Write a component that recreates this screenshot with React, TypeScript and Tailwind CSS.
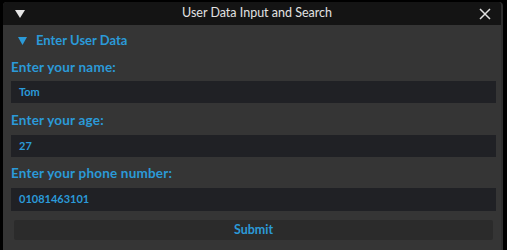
import React from 'react'

const blue = 'text-[#2b9ad8]'

function Field({ label, value, labelTop, inputTop, inputH }: { label: string; value: string; labelTop: string; inputTop: string; inputH: string }) {
  return (
    <>
      <div className={`${labelTop} h-[18px] flex items-center text-[13.5px] font-bold tracking-[0.2px] ${blue}`}>{label}</div>
      <div className={`${inputTop} ${inputH} bg-[#202125] flex items-center pl-[8px] text-[11px] font-bold ${blue}`}>{value}</div>
    </>
  )
}

export default function App() {
  return (
    <div className="w-[507px] h-[250px] bg-black overflow-hidden" style={{ fontFamily: 'Lato, "Open Sans", sans-serif' }}>
      <div className="ml-[3px] mt-[2px] w-[500px] h-[248px] bg-[#353535] rounded-t-[4px] overflow-hidden border-r-[2px] border-[#2e2e2e]">
        {/* title bar */}
        <div className="h-[23px] bg-[#141414] flex items-center relative">
          <svg width="10" height="8" viewBox="0 0 10 8" className="ml-[12px]">
            <polygon points="0,0 10,0 5,8" fill="#e6e6e6" />
          </svg>
          <div className="flex-1 text-center text-[12.5px] text-[#e2e2e2] pl-[10px]">User Data Input and Search</div>
          <svg width="12" height="12" viewBox="0 0 12 12" className="mr-[10px]">
            <path d="M1 1 L11 11 M11 1 L1 11" stroke="#e0e0e0" strokeWidth="1.5" />
          </svg>
        </div>

        <div className="pl-[8px] pr-[5px]">
          {/* collapsing header */}
          <div className={`h-[32px] flex items-center text-[13px] font-bold ${blue}`}>
            <svg width="9" height="8" viewBox="0 0 9 8" className="ml-[7px] mr-[9px]">
              <polygon points="0,0 9,0 4.5,8" fill="#2b9ad8" />
            </svg>
            Enter User Data
          </div>

          <Field label="Enter your name:" value="Tom" labelTop="mt-[1px]" inputTop="mt-[5px]" inputH="h-[22px]" />
          <Field label="Enter your age:" value="27" labelTop="mt-[8px]" inputTop="mt-[6px]" inputH="h-[22px]" />
          <Field label="Enter your phone number:" value="01081463101" labelTop="mt-[7px]" inputTop="mt-[6px]" inputH="h-[23px]" />

          <div className={`mt-[9px] mx-[3px] h-[20px] bg-[#2b2b2b] rounded-[2px] flex items-center justify-center text-[12.5px] font-bold ${blue}`}>
            Submit
          </div>
        </div>
      </div>
    </div>
  )
}
